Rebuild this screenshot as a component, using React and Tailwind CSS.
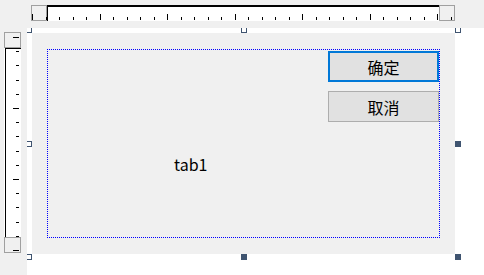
import React from "react";

const FONT = { fontFamily: '"Noto Sans CJK SC", "Noto Sans", sans-serif' };

// ticks along the top ruler, x relative to the row start (x=31)
const hTicks = Array.from({ length: 32 }, (_, k) => ({ x: Math.round(1 + 13.5 * k), long: k % 5 === 0 }));
// ticks along the left ruler, y relative to the column start (y=28)
const vTicks = Array.from({ length: 16 }, (_, k) => ({ y: Math.round(5 + 14.2 * k), long: k % 5 === 0 }));

const Handle = ({ filled, className }) => (
  <div
    className={
      "absolute w-[6px] h-[6px] " +
      (filled ? "bg-[#3f5470] " : "border border-[#3f5470] ") +
      className
    }
  />
);

const TopRuler = () => (
  <div className="relative ml-[31px] mt-[5px] flex h-[16px] w-[424px]">
    <div className="w-[16px] h-[16px] border border-[#a0a0a0] bg-[#f0f0f0]" />
    <div className="w-[392px] h-[16px] bg-white border-t-2 border-l border-black" />
    <div className="w-[16px] h-[16px] border border-[#a0a0a0] bg-[#f0f0f0]" />
    <svg className="absolute left-0 top-0" width="424" height="16">
      {hTicks.map((t, i) => (
        <rect key={i} x={t.x} y={t.long ? 9 : 12} width="1" height={t.long ? 6 : 3} fill="#000" />
      ))}
    </svg>
  </div>
);

const LeftRuler = () => (
  <div className="relative ml-[4px] mt-[4px] flex w-[17px] flex-col">
    <div className="w-[17px] h-[16px] border border-[#a0a0a0] bg-[#f0f0f0]" />
    <div className="w-[17px] h-[189px] bg-white pl-px">
      <div className="h-full border-t border-l border-black" />
    </div>
    <div className="w-[17px] h-[16px] border border-[#a0a0a0] bg-[#f0f0f0]" />
    <svg className="absolute left-0 top-0" width="17" height="221">
      {vTicks.map((t, i) => (
        <rect key={i} x={t.long ? 9 : 12} y={t.y} width={t.long ? 6 : 3} height="1" fill="#000" />
      ))}
    </svg>
  </div>
);

const FormButton = ({ primary, children }) => (
  <button
    className={
      "w-[111px] h-[31px] bg-[#e1e1e1] text-[16px] leading-none text-black " +
      (primary ? "border-2 border-[#0078d7]" : "border border-[#adadad]")
    }
  >
    {children}
  </button>
);

export default function App() {
  return (
    <div className="w-[484px] h-[275px] overflow-hidden bg-[#f0f0f0] flex flex-col" style={FONT}>
      <div className="h-[28px] shrink-0">
        <TopRuler />
      </div>
      <div className="flex flex-1">
        <div className="w-[27px] shrink-0">
          <LeftRuler />
        </div>
        <div className="relative flex-1 overflow-hidden bg-white">
          <div className="ml-[5px] mt-[5px] w-[423px] h-[221px] bg-[#f0f0f0] pl-[15px] pt-[16px]">
            <div className="w-[393px] h-[189px] border border-dotted border-[#0000ff] flex flex-col items-end pt-px">
              <FormButton primary>确定</FormButton>
              <div className="mt-[9px]">
                <FormButton>取消</FormButton>
              </div>
              <span className="self-start ml-[126px] mt-[34px] text-[16px] leading-4 text-black">tab1</span>
            </div>
          </div>
          <Handle className="left-[-1px] top-[-1px]" />
          <Handle className="left-[214px] top-[-1px]" />
          <Handle className="left-[428px] top-[-1px]" />
          <Handle className="left-[-1px] top-[113px]" />
          <Handle filled className="left-[428px] top-[113px]" />
          <Handle className="left-[-1px] top-[226px]" />
          <Handle filled className="left-[214px] top-[226px]" />
          <Handle filled className="left-[428px] top-[226px]" />
        </div>
      </div>
    </div>
  );
}
